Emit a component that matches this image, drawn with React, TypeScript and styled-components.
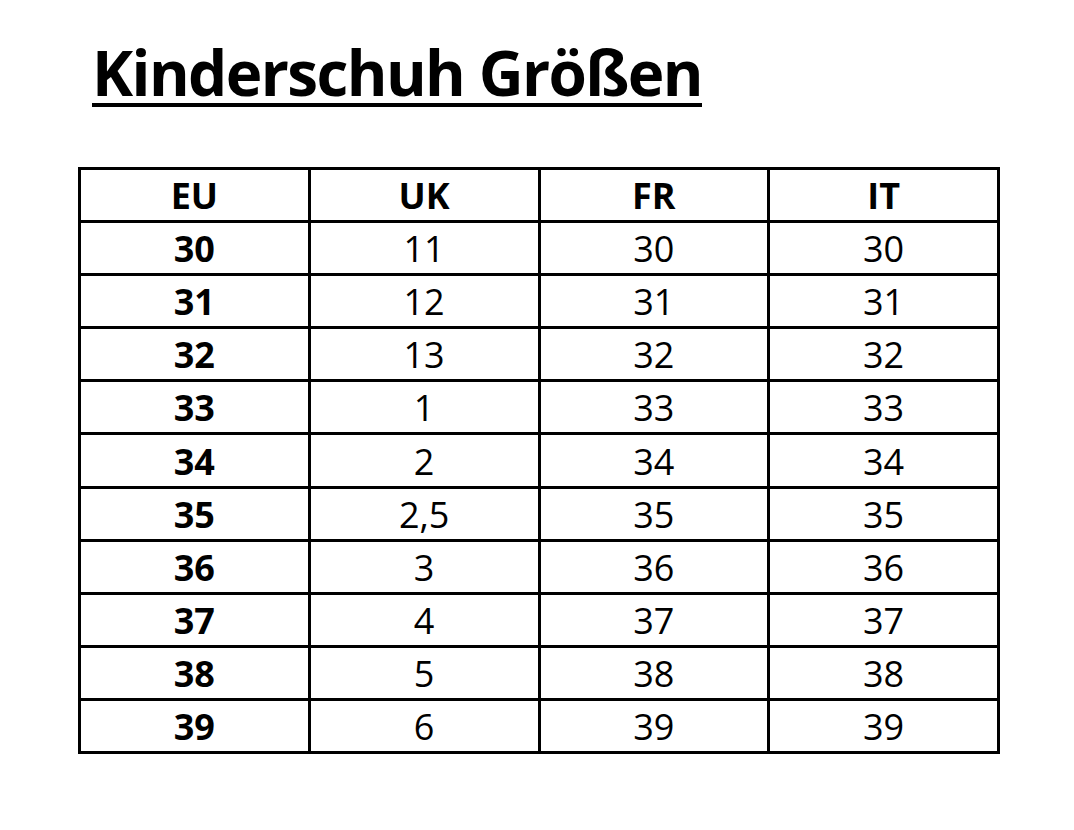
import React from 'react';
import styled, { createGlobalStyle } from 'styled-components';

const GlobalStyle = createGlobalStyle`
  html, body {
    margin: 0;
    padding: 0;
    background: #ffffff;
  }
  body {
    font-family: "Open Sans", "Noto Sans", sans-serif;
    color: #000000;
  }
`;

const Page = styled.div`
  width: 1074px;
  height: 830px;
  padding: 27px 0 0 78px;
  box-sizing: border-box;
`;

const Title = styled.h1`
  margin: 0 0 0 14px;
  font-size: 62px;
  font-weight: 700;
  line-height: 90px;
  letter-spacing: -1.6px;
  display: inline-block;
  text-decoration: underline;
  text-decoration-thickness: 4px;
  text-underline-offset: 7px;
`;

const Table = styled.table`
  margin-top: 50px;
  width: 922px;
  border-collapse: collapse;
  table-layout: fixed;
`;

const Cell = styled.td<{ $bold?: boolean }>`
  border: 3px solid #000000;
  height: 48.1px;
  padding: 2px 0 0;
  text-align: center;
  vertical-align: middle;
  font-size: 36px;
  line-height: 1;
  font-weight: ${(p) => (p.$bold ? 700 : 400)};
`;

const head = ['EU', 'UK', 'FR', 'IT'];

const rows: string[][] = [
  ['30', '11', '30', '30'],
  ['31', '12', '31', '31'],
  ['32', '13', '32', '32'],
  ['33', '1', '33', '33'],
  ['34', '2', '34', '34'],
  ['35', '2,5', '35', '35'],
  ['36', '3', '36', '36'],
  ['37', '4', '37', '37'],
  ['38', '5', '38', '38'],
  ['39', '6', '39', '39'],
];

export default function App() {
  return (
    <Page>
      <GlobalStyle />
      <Title>Kinderschuh Größen</Title>
      <Table>
        <tbody>
          <tr>
            {head.map((h) => (
              <Cell key={h} $bold>
                {h}
              </Cell>
            ))}
          </tr>
          {rows.map((r) => (
            <tr key={r[0]}>
              {r.map((v, i) => (
                <Cell key={i} $bold={i === 0}>
                  {v}
                </Cell>
              ))}
            </tr>
          ))}
        </tbody>
      </Table>
    </Page>
  );
}
